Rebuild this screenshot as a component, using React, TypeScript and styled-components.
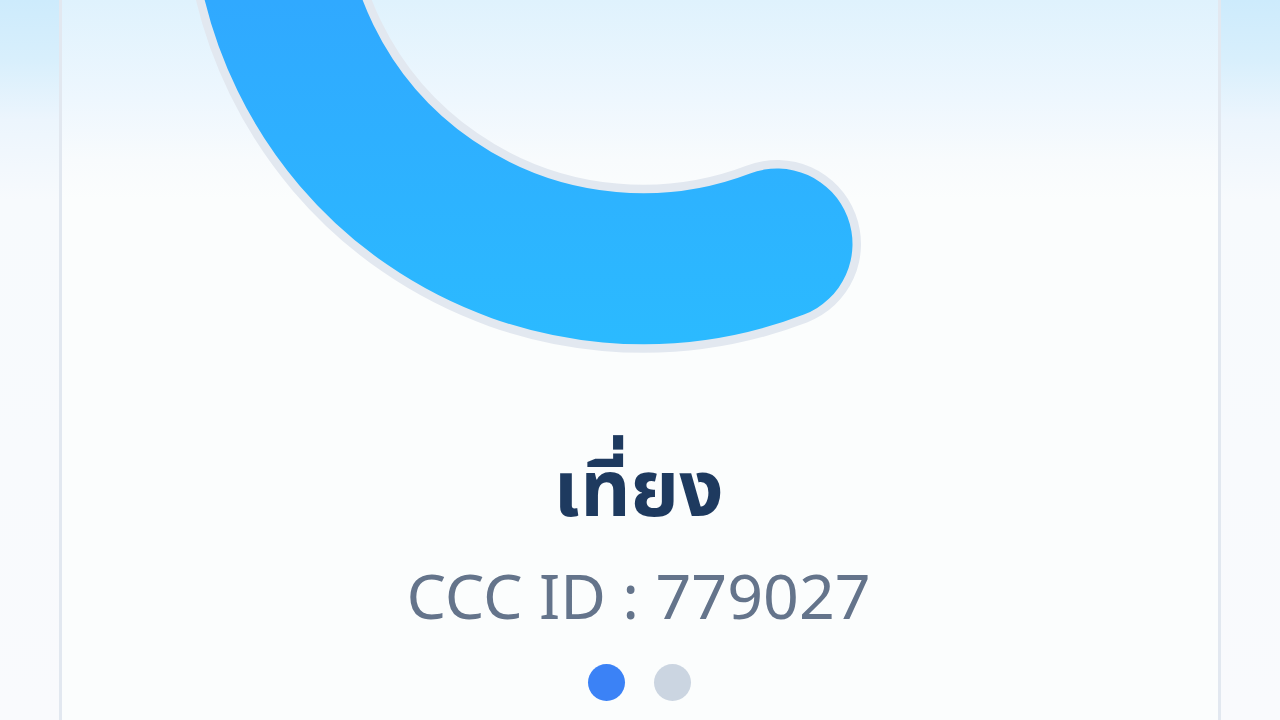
import styled, { createGlobalStyle } from "styled-components";

const GlobalStyle = createGlobalStyle`
  html, body {
    margin: 0;
    padding: 0;
    height: 100%;
    overflow: hidden;
  }
`;

const Page = styled.div`
  width: 1280px;
  height: 720px;
  padding: 0 59px;
  box-sizing: border-box;
  background: linear-gradient(180deg, #cdebfc 0%, #d8effc 60px, #ecf5fd 120px, #f7fafd 200px, #f9fafd 100%);
  font-family: "Noto Sans", "Noto Sans Thai", "Open Sans", sans-serif;
`;

const Card = styled.main`
  height: 720px;
  box-sizing: border-box;
  border-left: 3px solid #e2e8f0;
  border-right: 3px solid #e2e8f0;
  background: linear-gradient(180deg, #dff2fd 0%, #eef7fe 100px, #f8fbfd 160px, #fbfdfd 200px, #fbfdfd 100%);
  display: flex;
  flex-direction: column;
  align-items: center;
  overflow: hidden;
`;

const Gauge = styled.svg`
  display: block;
  flex: none;
  width: 1156px;
  height: 436px;
`;

const Title = styled.h1`
  margin: 0 3px 0 0;
  font-size: 78px;
  line-height: 100px;
  font-weight: 700;
  color: #1e3a5f;
`;

const IdLine = styled.p`
  margin: 19px 3px 0 0;
  font-size: 62.7px;
  line-height: 80px;
  font-weight: 400;
  color: #64748b;
`;

const Dots = styled.div`
  display: flex;
  gap: 29px;
  margin: 29px 2px 0 0;
`;

const Dot = styled.span<{ $active?: boolean }>`
  width: 37px;
  height: 37px;
  border-radius: 50%;
  background: ${(p) => (p.$active ? "#3b82f6" : "#cbd5e1")};
`;

// arc centre is above the top of the picture, at (643, -107)
const ARC = "M 267.5 -107 A 375.5 375.5 0 0 0 777 244";

export default function App() {
  return (
    <>
      <GlobalStyle />
      <Page>
        <Card>
          <Gauge viewBox="62 0 1156 436">
            <defs>
              <linearGradient id="arcFill" x1="0" y1="0" x2="0" y2="340" gradientUnits="userSpaceOnUse">
                <stop offset="0" stopColor="#30a9ff" />
                <stop offset="1" stopColor="#2bbaff" />
              </linearGradient>
            </defs>
            <path d={ARC} fill="none" stroke="#e2e8f0" strokeWidth="168" strokeLinecap="round" />
            <path d={ARC} fill="none" stroke="url(#arcFill)" strokeWidth="151" strokeLinecap="round" />
          </Gauge>
          <Title>เที่ยง</Title>
          <IdLine>CCC ID : 779027</IdLine>
          <Dots>
            <Dot $active />
            <Dot />
          </Dots>
        </Card>
      </Page>
    </>
  );
}
